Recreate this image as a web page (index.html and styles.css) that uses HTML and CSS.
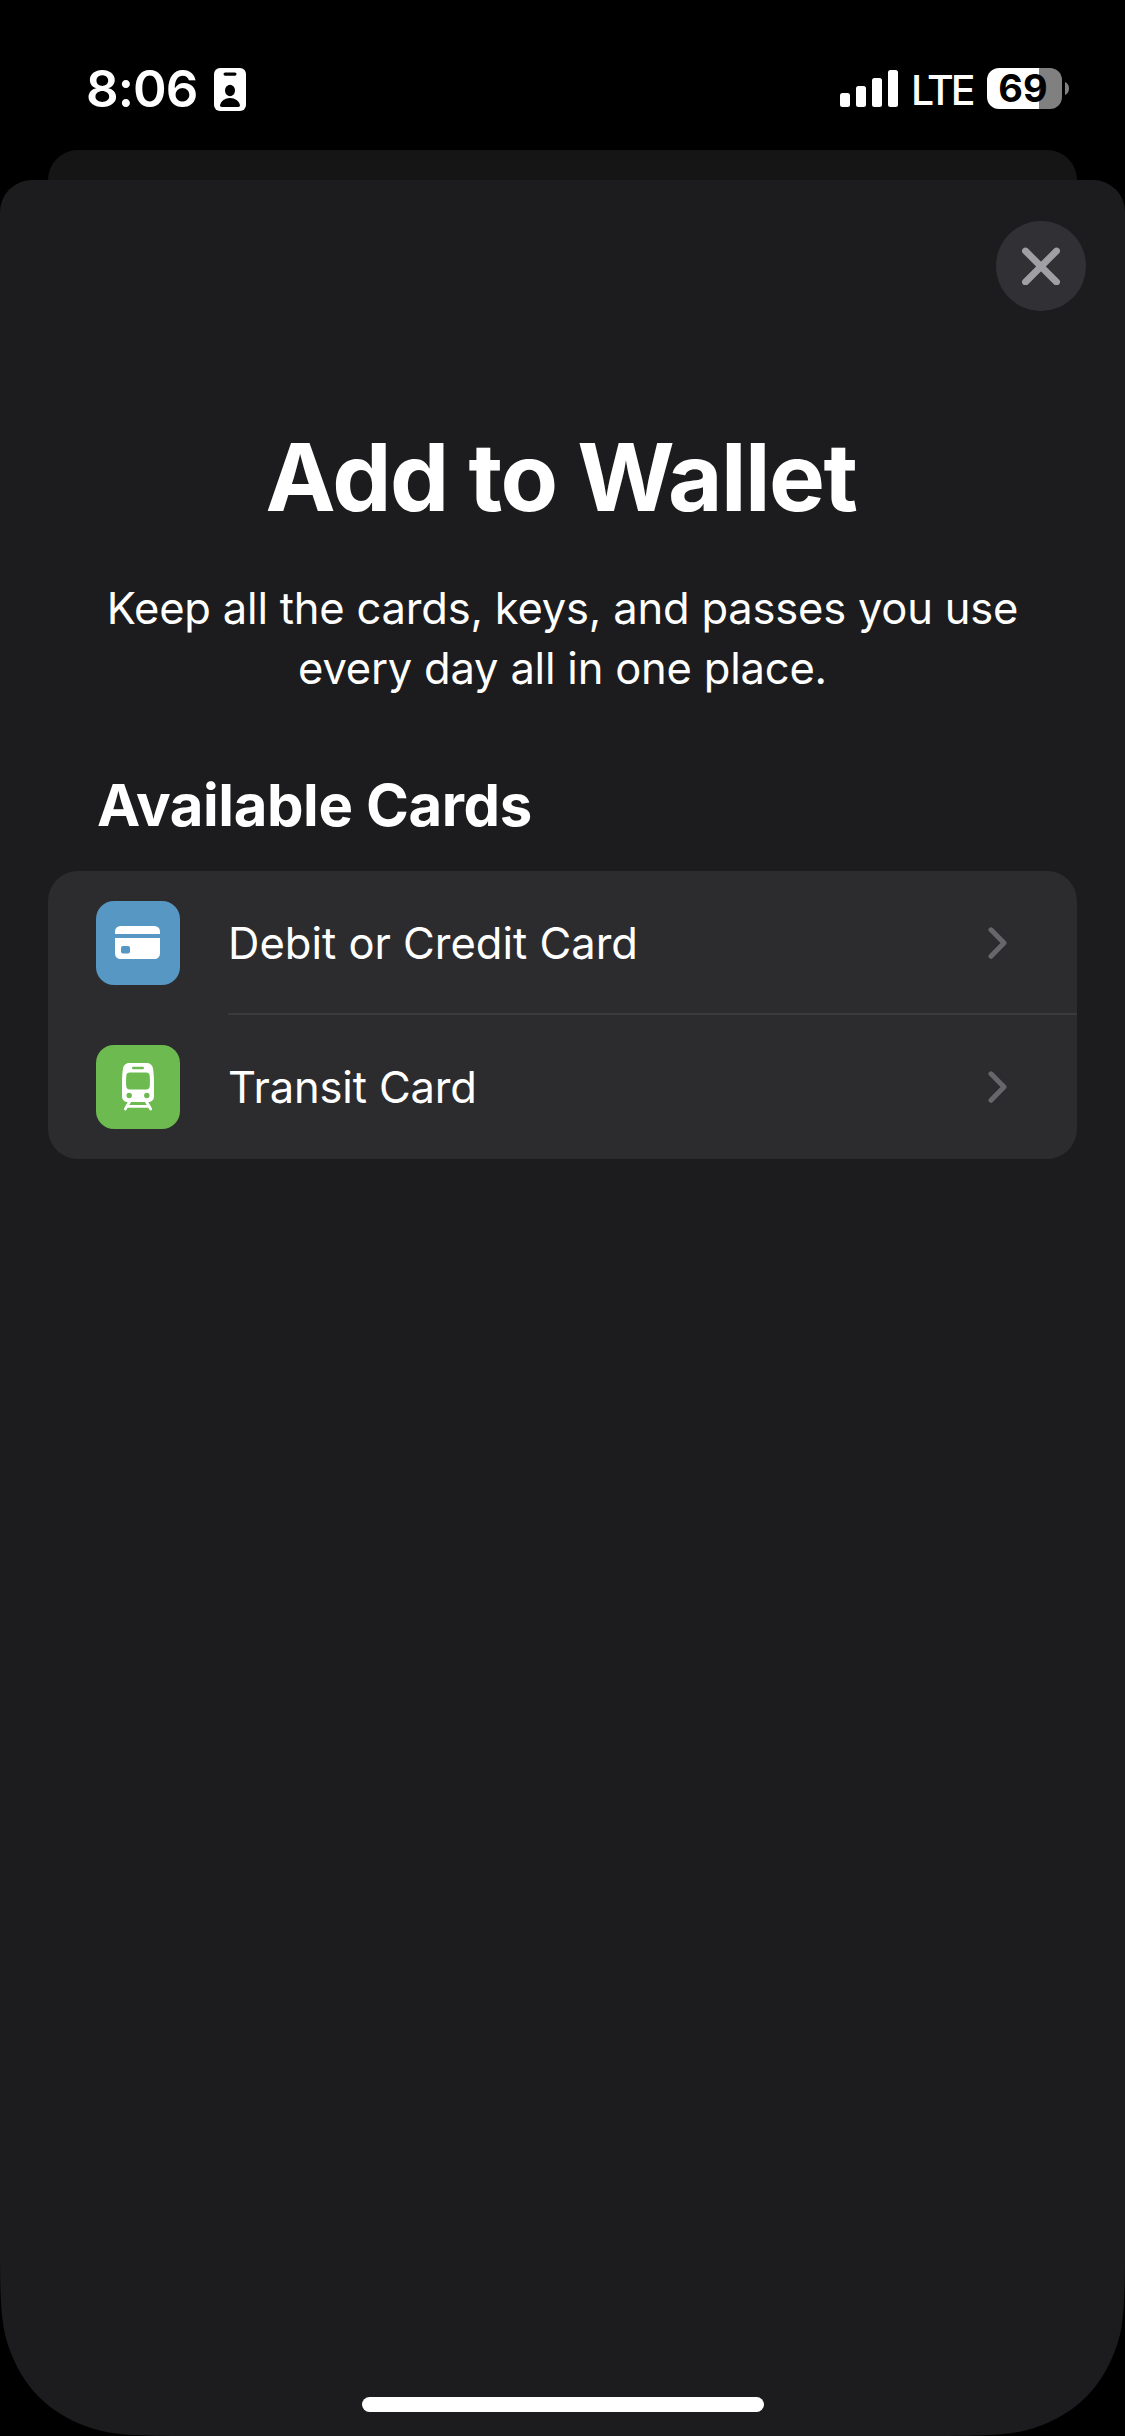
FILE: index.html
```
<!DOCTYPE html>
<html lang="en">
<head>
  <meta charset="utf-8">
  <title>Add to Wallet</title>
  <link rel="stylesheet" href="styles.css">
</head>
<body>
  <header class="status-bar">
    <span class="time">8:06</span>
    <svg class="badge" width="32" height="43" viewBox="0 0 32 43">
      <rect width="32" height="43" rx="6" fill="#fff"/>
      <rect x="9.5" y="4.5" width="13" height="3.2" rx="1.6"/>
      <ellipse cx="16" cy="22.5" rx="5" ry="5.7"/>
      <path d="M8 39c-1.500 0-2-.7-2-1.700C7 33 11 30 16 30s9 3 10 7.300c0 1-.5 1.700-2 1.700z"/>
    </svg>
    <svg class="signal" width="58" height="37" viewBox="0 0 58 37" fill="#fff">
      <rect x="0" y="23" width="10" height="14" rx="2.500"/>
      <rect x="16" y="16" width="10" height="21" rx="2.500"/>
      <rect x="32" y="8" width="10" height="29" rx="2.500"/>
      <rect x="48" y="0" width="10" height="37" rx="2.500"/>
    </svg>
    <span class="network">LTE</span>
    <span class="battery">69</span>
    <svg class="battery-cap" width="4" height="13" viewBox="0 0 4 13">
      <path d="M0 0c2.500 1 4 3.500 4 6.500S2.500 12 0 13z" fill="#808080"/>
    </svg>
  </header>

  <div class="sheet-behind"></div>

  <main class="sheet">
    <button class="close" aria-label="Close">
      <svg width="38" height="38" viewBox="0 0 38 38" fill="none" stroke="#9f9fa5" stroke-width="6.800" stroke-linecap="round">
        <path d="M3.500 4l31 31M34.500 4l-31 31"/>
      </svg>
    </button>

    <h1>Add to Wallet</h1>
    <p class="intro">Keep all the cards, keys, and passes you use<br>every day all in one place.</p>

    <h2>Available Cards</h2>
    <ul class="cards">
      <li>
        <span class="icon blue">
          <svg width="84" height="84" viewBox="0 0 84 84">
            <path d="M19 33v-2.500a5.500 5.500 0 0 1 5.500-5.500h34a5.500 5.500 0 0 1 5.500 5.500V33z" fill="#fff"/>
            <path d="M19 37h45v15.500a5.500 5.500 0 0 1-5.500 5.500h-34a5.500 5.500 0 0 1-5.500-5.500z" fill="#fff"/>
            <rect x="25" y="45" width="9" height="7.500" rx="2" fill="#5797c4"/>
          </svg>
        </span>
        <span class="label debit">Debit or Credit Card</span>
        <svg class="chevron" width="20" height="32" viewBox="0 0 20 32"><path d="M3 2.800L16 16 3 29.200"/></svg>
      </li>
      <li>
        <span class="icon green">
          <svg width="84" height="84" viewBox="0 0 84 84">
            <path d="M34 18h16c4 0 6.500 2 7 5.500.7 4.500 1 8.500 1 14V51c0 3.600-2 6-5.500 6h-21C28 57 26 54.600 26 51V37.500c0-5.500.3-9.500 1-14 .5-3.500 3-5.500 7-5.500z" fill="#fff"/>
            <rect x="36" y="21.700" width="12" height="2.600" rx="1.300" fill="#6dbb50"/>
            <path d="M34 27.500h16c2.500 0 3.500 1 3.700 3.300.3 3 .3 7 .1 10.200-.2 2.300-1.200 3.500-3.600 3.500H33.800c-2.400 0-3.400-1.200-3.600-3.500-.2-3.200-.2-7.200.1-10.200.2-2.300 1.200-3.300 3.700-3.300z" fill="#6dbb50"/>
            <circle cx="33.200" cy="50.500" r="2.700" fill="#6dbb50"/>
            <circle cx="50.800" cy="50.500" r="2.700" fill="#6dbb50"/>
            <path d="M34 56l-4.700 8M50 56l4.700 8M31.500 61.300h21" fill="none" stroke="#fff" stroke-width="2.800" stroke-linecap="round"/>
          </svg>
        </span>
        <span class="label transit">Transit Card</span>
        <svg class="chevron" width="20" height="32" viewBox="0 0 20 32"><path d="M3 2.800L16 16 3 29.200"/></svg>
      </li>
    </ul>

    <div class="home-indicator"></div>
  </main>
</body>
</html>
```
FILE: styles.css
```
* {
  box-sizing: border-box;
}

body {
  margin: 0;
  width: 1125px;
  height: 2436px;
  display: flex;
  flex-direction: column;
  overflow: hidden;
  background: #000;
  color: #fff;
  font-family: Inter, "Liberation Sans", sans-serif;
}

svg {
  display: block;
}

/* status bar */
.status-bar {
  display: flex;
  align-items: flex-start;
  height: 150px;
  padding: 68px 56px 0 86px;
}
.time {
  width: 128px;
  font-size: 51px;
  font-weight: 600;
  line-height: 42px;
  letter-spacing: -0.9px;
}
.signal {
  margin: 2px 0 0 594px;
}
.network {
  width: 89px;
  padding-left: 13px;
  font-size: 41px;
  font-weight: 450;
  line-height: 44px;
  letter-spacing: -3.2px;
}
.battery {
  width: 75px;
  height: 41px;
  padding-right: 3px;
  border-radius: 12px;
  background: linear-gradient(to right, #fff 52px, #808080 52px);
  color: #000;
  font-size: 38px;
  font-weight: 700;
  line-height: 41px;
  text-align: center;
}
.battery-cap {
  margin: 14px 0 0 3px;
}

/* sheets */
.sheet-behind {
  height: 30px;
  margin: 0 48px;
  border-radius: 30px 30px 0 0;
  background: #151515;
}
.sheet {
  display: flex;
  flex-direction: column;
  height: 2256px;
  border-radius: 32px 32px 0 0;
  background: #1c1c1e;
  /* bottom follows the rounded corners of the display */
  clip-path: path("M0 0H1125V2065C1125 2120 1124 2144 1117 2165C1103 2207 1076 2234 1034 2248C1013 2255 989 2256 934 2256H191C136 2256 112 2255 91 2248C49 2234 22 2207 8 2165C1 2144 0 2120 0 2065Z");
}
.close {
  display: flex;
  align-items: center;
  justify-content: center;
  align-self: flex-end;
  width: 90px;
  height: 90px;
  margin: 41px 39px 0 0;
  padding: 0;
  border: 0;
  border-radius: 50%;
  background: #313135;
}

h1 {
  margin: 109px 0 0;
  padding-right: 3px;
  font-size: 94px;
  font-weight: 700;
  line-height: 114px;
  letter-spacing: -1.5px;
  text-align: center;
}
.intro {
  margin: 44px 0 0;
  font-size: 43.5px;
  line-height: 60px;
  letter-spacing: -0.2px;
  text-align: center;
}
h2 {
  margin: 72px 0 0 97px;
  font-size: 58px;
  font-weight: 700;
  line-height: 70px;
  letter-spacing: -0.4px;
}

.cards {
  margin: 31px 48px 0;
  padding: 0;
  border-radius: 30px;
  background: #2c2c2e;
  list-style: none;
}
.cards li {
  display: flex;
  align-items: center;
  height: 144px;
  padding: 0 69px 0 48px;
}
.cards li:first-child {
  background: linear-gradient(#3a3a3c, #3a3a3c) 180px 100% / 100% 2px no-repeat;
}
.icon {
  width: 84px;
  height: 84px;
  border-radius: 18px;
}
.blue {
  background: #5797c4;
}
.green {
  background: #6dbb50;
}
.label {
  flex: 1;
  padding-left: 48px;
  font-size: 43.5px;
  line-height: 60px;
}
.transit {
  letter-spacing: -0.15px;
}
.chevron {
  fill: none;
  stroke: #67676b;
  stroke-width: 5;
  stroke-linecap: round;
  stroke-linejoin: round;
}

.home-indicator {
  width: 402px;
  height: 15px;
  margin: auto auto 24px;
  border-radius: 8px;
  background: #fff;
}
```
